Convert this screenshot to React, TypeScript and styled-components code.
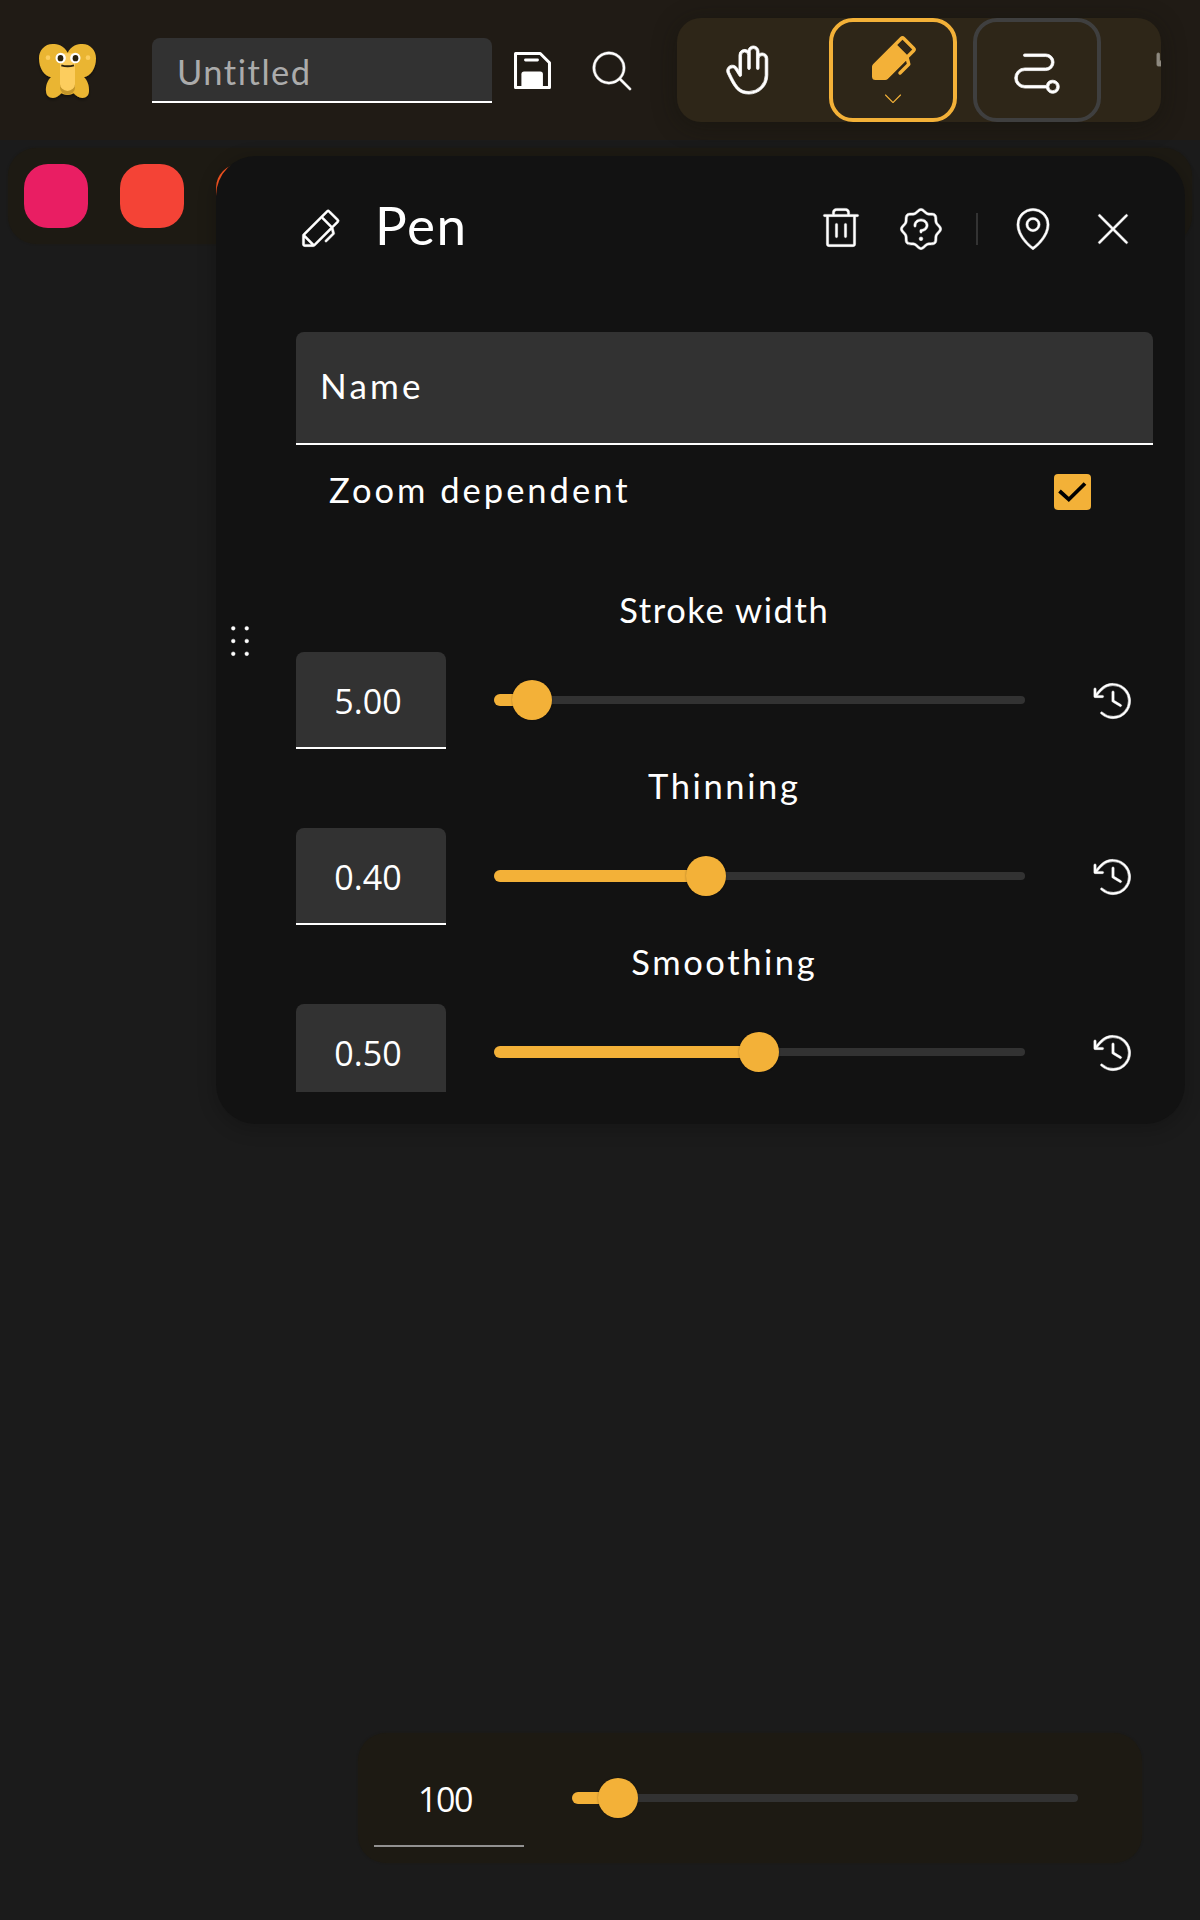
import React from "react";
import styled, { createGlobalStyle, css } from "styled-components";
import {
  PiArrowCounterClockwiseLight,
  PiCaretDownLight,
  PiClockCounterClockwiseLight,
  PiDotsSixVerticalLight,
  PiHandLight,
  PiMagnifyingGlassLight,
  PiMapPinLight,
  PiPathLight,
  PiPenFill,
  PiPenLight,
  PiSealQuestionLight,
  PiTrashLight,
  PiXLight,
} from "react-icons/pi";

const accent = "#f3b138";
const field = "#323232";

const GlobalStyle = createGlobalStyle`
  * { box-sizing: border-box; }
  body {
    margin: 0;
    background: #1b1b1b;
    color: #fff;
    font-family: Lato, "Noto Sans", sans-serif;
    font-variant-ligatures: none;
  }
`;

const Screen = styled.div`
  position: relative;
  display: flex;
  flex-direction: column;
  width: 1200px;
  height: 1920px;
  overflow: hidden;
  background: #1b1b1b;
`;

const Header = styled.header`
  display: flex;
  align-items: center;
  height: 140px;
  padding: 0 39.5px 0 20px;
  background: #201b15;
`;

const LogoBox = styled.div`
  display: flex;
  width: 132px;
`;

const TitleField = styled.div`
  display: flex;
  align-items: center;
  width: 340px;
  height: 65px;
  margin-top: 1px;
  padding: 6px 25px 0;
  border-bottom: 2px solid #fff;
  border-radius: 8px 8px 0 0;
  background: ${field};
  color: #ababab;
  font-size: 34.5px;
  line-height: 1;
  letter-spacing: 1.5px;
`;

const IconButton = styled.button`
  display: flex;
  flex: none;
  align-items: center;
  justify-content: center;
  width: 80px;
  height: 80px;
  padding: 1px 0 0;
  border: 0;
  background: none;
  color: #fff;
  font-size: 48px;
  svg { stroke-width: 2.5px; }
`;

const Toolbar = styled.nav`
  display: flex;
  flex: none;
  gap: 16px;
  width: 484px;
  height: 104px;
  padding-left: 8px;
  overflow: hidden;
  border-radius: 24px;
  background: #2e2618;
`;

const ToolbarShadow = styled.div`
  margin-left: auto;
  border-radius: 24px;
  box-shadow: 0 4px 24px rgba(18, 18, 10, 0.45);
`;

const Tool = styled.button<{ $state?: "active" | "outlined" | "disabled" }>`
  display: flex;
  flex: none;
  flex-direction: column;
  align-items: center;
  justify-content: center;
  width: 128px;
  height: 104px;
  padding: 0;
  border: 4px solid transparent;
  border-radius: 24px;
  background: none;
  color: #fff;
  font-size: 56px;
  svg { stroke-width: 3.5px; }
  ${(p) =>
    p.$state === "active" &&
    css`
      border-color: ${accent};
      color: ${accent};
      svg { stroke-width: 0; }
      svg + svg { margin-top: -1px; }
    `}
  ${(p) => p.$state === "outlined" && css`border-color: #3f3f3f; padding-top: 1px;`}
  ${(p) => p.$state === "disabled" && css`color: #8f8a80;`}
`;

const Palette = styled.div`
  display: flex;
  gap: 32px;
  height: 96px;
  margin: 8px 8px 0;
  padding: 16px;
  border-radius: 28px;
  background: #1d1a13;
  box-shadow: 0 0 2px rgba(29, 26, 19, 0.8);
`;

const Swatch = styled.div<{ $color: string }>`
  width: 64px;
  height: 64px;
  border-radius: 24px;
  background: ${(p) => p.$color};
`;

const Canvas = styled.main`
  display: flex;
  flex: 1;
  align-items: flex-end;
  justify-content: flex-end;
  padding: 0 58px 57px 0;
`;

const ZoomBar = styled.div`
  display: flex;
  align-items: center;
  width: 784px;
  height: 130px;
  padding-left: 15.5px;
  border-radius: 28px;
  background: #1d1a13;
  box-shadow: 0 0 2px rgba(29, 26, 19, 0.8);
`;

const PenCard = styled.section`
  position: absolute;
  top: 156px;
  left: 216px;
  display: flex;
  width: 968.5px;
  height: 968px;
  border-radius: 40px;
  background: #121212;
  box-shadow: 0 4px 16px 4px rgba(0, 0, 0, 0.16);
`;

const DragHandle = styled.div`
  display: flex;
  align-items: center;
  justify-content: center;
  width: 48px;
  padding-top: 2px;
  font-size: 48px;
  svg { stroke-width: 2.5px; }
`;

const CardBody = styled.div`
  display: flex;
  flex-direction: column;
  width: 856.5px;
  height: 936px;
  margin-left: 32px;
  overflow: hidden;
`;

const CardHeader = styled.div`
  display: flex;
  flex: none;
  align-items: center;
  height: 144px;
  margin-bottom: 32px;
  padding-top: 1px;
  svg { flex: none; stroke-width: 2.5px; }
`;

const CardTitle = styled.h1`
  flex: 1;
  margin: -9px 0 0 31px;
  font-size: 53px;
  font-weight: 400;
  line-height: 1;
  letter-spacing: 1.5px;
`;

const Divider = styled.span`
  width: 2px;
  height: 32px;
  margin: 0 15px;
  background: #333;
`;

const NameField = styled.div`
  display: flex;
  flex: none;
  align-items: center;
  height: 113px;
  padding: 0 24px 6px;
  border-bottom: 2px solid #fff;
  border-radius: 8px 8px 0 0;
  background: ${field};
  font-size: 35px;
  letter-spacing: 3.2px;
`;

const CheckRow = styled.div`
  display: flex;
  flex: none;
  align-items: center;
  justify-content: space-between;
  height: 94px;
  padding: 0 62px 0 33px;
  font-size: 34.5px;
  letter-spacing: 3px;
`;

const CheckLabel = styled.span`
  padding-bottom: 6px;
`;

const Checkbox = styled.span`
  display: flex;
  width: 36.5px;
  height: 36px;
  border-radius: 4px;
  background: ${accent};
`;

const Settings = styled.div`
  display: flex;
  flex: none;
  flex-direction: column;
  margin-top: 37px;
`;

const Setting = styled.div`
  display: flex;
  flex: none;
  flex-direction: column;
  height: 176px;
`;

const SettingLabel = styled.div<{ $spacing: number }>`
  height: 76px;
  padding-top: 14px;
  text-align: center;
  font-size: 34.5px;
  line-height: 40px;
  letter-spacing: ${(p) => p.$spacing}px;
`;

const SettingRow = styled.div`
  display: flex;
  align-items: center;
`;

const NumberField = styled.div<{ $plain?: boolean }>`
  display: flex;
  align-items: center;
  flex: none;
  justify-content: center;
  width: 150px;
  height: 97px;
  padding: 2px 6px 0 0;
  border-bottom: 2px solid ${(p) => (p.$plain ? "#929191" : "#fff")};
  border-radius: ${(p) => (p.$plain ? "0" : "8px 8px 0 0")};
  background: ${(p) => (p.$plain ? "transparent" : field)};
  font-family: "Open Sans", sans-serif;
  font-size: 34px;
  line-height: 1;
  ${(p) => p.$plain && css`padding: 4px 7px 0 0; letter-spacing: -1.5px;`}
`;

const Track = styled.div<{ $width: number }>`
  display: grid;
  flex: none;
  align-items: center;
  width: ${(p) => p.$width}px;
  height: 40px;
  margin: 0 0 1px 48px;
  > * { grid-area: 1 / 1; }
`;

const Rail = styled.span`
  height: 8px;
  border-radius: 4px;
  background: #323232;
`;

const Fill = styled.span`
  height: 12px;
  border-radius: 6px;
  background: ${accent};
`;

const Thumb = styled.span`
  width: 40px;
  height: 40px;
  border-radius: 50%;
  background: ${accent};
  box-shadow: 0 0 2px rgba(0, 0, 0, 0.35);
`;

const ResetButton = styled(IconButton)`
  margin-left: 48px;
`;

function Slider({ width, value }: { width: number; value: number }) {
  const x = value * width;
  return (
    <Track $width={width}>
      <Rail />
      <Fill style={{ width: x }} />
      <Thumb style={{ marginLeft: x - 20 }} />
    </Track>
  );
}

function Logo() {
  return (
    <svg width="100" height="80" viewBox="0 0 300 240">
      <defs>
        <filter id="soft" x="-20%" y="-20%" width="140%" height="150%">
          <feDropShadow dx="0" dy="6" stdDeviation="4" floodColor="#000" floodOpacity="0.4" />
        </filter>
      </defs>
      <path
        filter="url(#soft)"
        fill="#eab532"
        d="M143 68C132 46 112 42 98 42C74 42 57 61 57 85C57 116 74 138 93 142C82 152 77 168 78 184C79 198 88 204 99 204C109 204 117 197 124 190Q143 200 161 190C168 197 176 204 187 204C198 204 206 198 207 184C208 168 203 152 192 142C211 138 228 116 228 85C228 61 211 42 187 42C173 42 154 46 143 68Z"
      />
      <path fill="#c3952a" d="M120 165h45v8a22.500 21 0 0 1-45 0z" />
      <path fill="#fccd5e" d="M120 95L126 70H159L165 95V161a22.500 22 0 0 1-45 0z" />
      <circle cx="84" cy="83" r="7" fill="#fccd5e" />
      <circle cx="204" cy="83" r="7" fill="#fccd5e" />
      <circle cx="122" cy="84" r="15.500" fill="#fff" />
      <circle cx="166" cy="84" r="15.500" fill="#fff" />
      <ellipse cx="121.500" cy="84.500" rx="8.500" ry="9.500" fill="#2c230d" />
      <ellipse cx="166.500" cy="84.500" rx="8.500" ry="9.500" fill="#2c230d" />
      <path fill="none" stroke="#2c230d" strokeWidth="6" d="M124 106Q143 112 162 106" />
    </svg>
  );
}

function SaveIcon() {
  return (
    <svg width="37" height="37" viewBox="0 0 110 110">
      <path
        d="M4.500 4.500H78L105.500 32V105.500H4.500Z"
        fill="none"
        stroke="#fff"
        style={{ strokeWidth: 9 }}
        strokeLinejoin="round"
      />
      <path d="M22 105V66q0-8 8-8H78q8 0 8 8V105Z" fill="#fff" />
      <rect x="30" y="19" width="44" height="9" rx="4" fill="#fff" />
    </svg>
  );
}

const settings = [
  { label: "Stroke width", text: "5.00", value: 0.0722, spacing: 1.6 },
  { label: "Thinning", text: "0.40", value: 0.4, spacing: 2.6 },
  { label: "Smoothing", text: "0.50", value: 0.5, spacing: 2.6 },
];

export default function App() {
  return (
    <Screen>
      <GlobalStyle />
      <Header>
        <LogoBox>
          <Logo />
        </LogoBox>
        <TitleField>Untitled</TitleField>
        <IconButton>
          <SaveIcon />
        </IconButton>
        <IconButton>
          <PiMagnifyingGlassLight />
        </IconButton>
        <ToolbarShadow>
          <Toolbar>
            <Tool>
              <PiHandLight />
            </Tool>
            <Tool $state="active">
              <PiPenFill />
              <PiCaretDownLight size={24} />
            </Tool>
            <Tool $state="outlined">
              <PiPathLight />
            </Tool>
            <Tool $state="disabled">
              <PiArrowCounterClockwiseLight />
            </Tool>
          </Toolbar>
        </ToolbarShadow>
      </Header>
      <Palette>
        <Swatch $color="#e91e63" />
        <Swatch $color="#f44336" />
        <Swatch $color="#ff5722" />
      </Palette>
      <Canvas>
        <ZoomBar>
          <NumberField $plain>100</NumberField>
          <Slider width={506} value={0.091} />
        </ZoomBar>
      </Canvas>
      <PenCard>
        <DragHandle>
          <PiDotsSixVerticalLight />
        </DragHandle>
        <CardBody>
          <CardHeader>
            <PiPenLight size={48} />
            <CardTitle>Pen</CardTitle>
            <IconButton>
              <PiTrashLight />
            </IconButton>
            <IconButton>
              <PiSealQuestionLight />
            </IconButton>
            <Divider />
            <IconButton>
              <PiMapPinLight />
            </IconButton>
            <IconButton>
              <PiXLight />
            </IconButton>
          </CardHeader>
          <NameField>Name</NameField>
          <CheckRow>
            <CheckLabel>Zoom dependent</CheckLabel>
            <Checkbox>
              <svg width="36.500" height="36" viewBox="0 0 36.500 36">
                <path d="M5.500 17L14.800 25.500L31 9.500" fill="none" stroke="#000" strokeWidth="3.800" />
              </svg>
            </Checkbox>
          </CheckRow>
          <Settings>
            {settings.map((s) => (
              <Setting key={s.label}>
                <SettingLabel $spacing={s.spacing}>{s.label}</SettingLabel>
                <SettingRow>
                  <NumberField>{s.text}</NumberField>
                  <Slider width={530.5} value={s.value} />
                  <ResetButton>
                    <PiClockCounterClockwiseLight />
                  </ResetButton>
                </SettingRow>
              </Setting>
            ))}
          </Settings>
        </CardBody>
      </PenCard>
    </Screen>
  );
}
